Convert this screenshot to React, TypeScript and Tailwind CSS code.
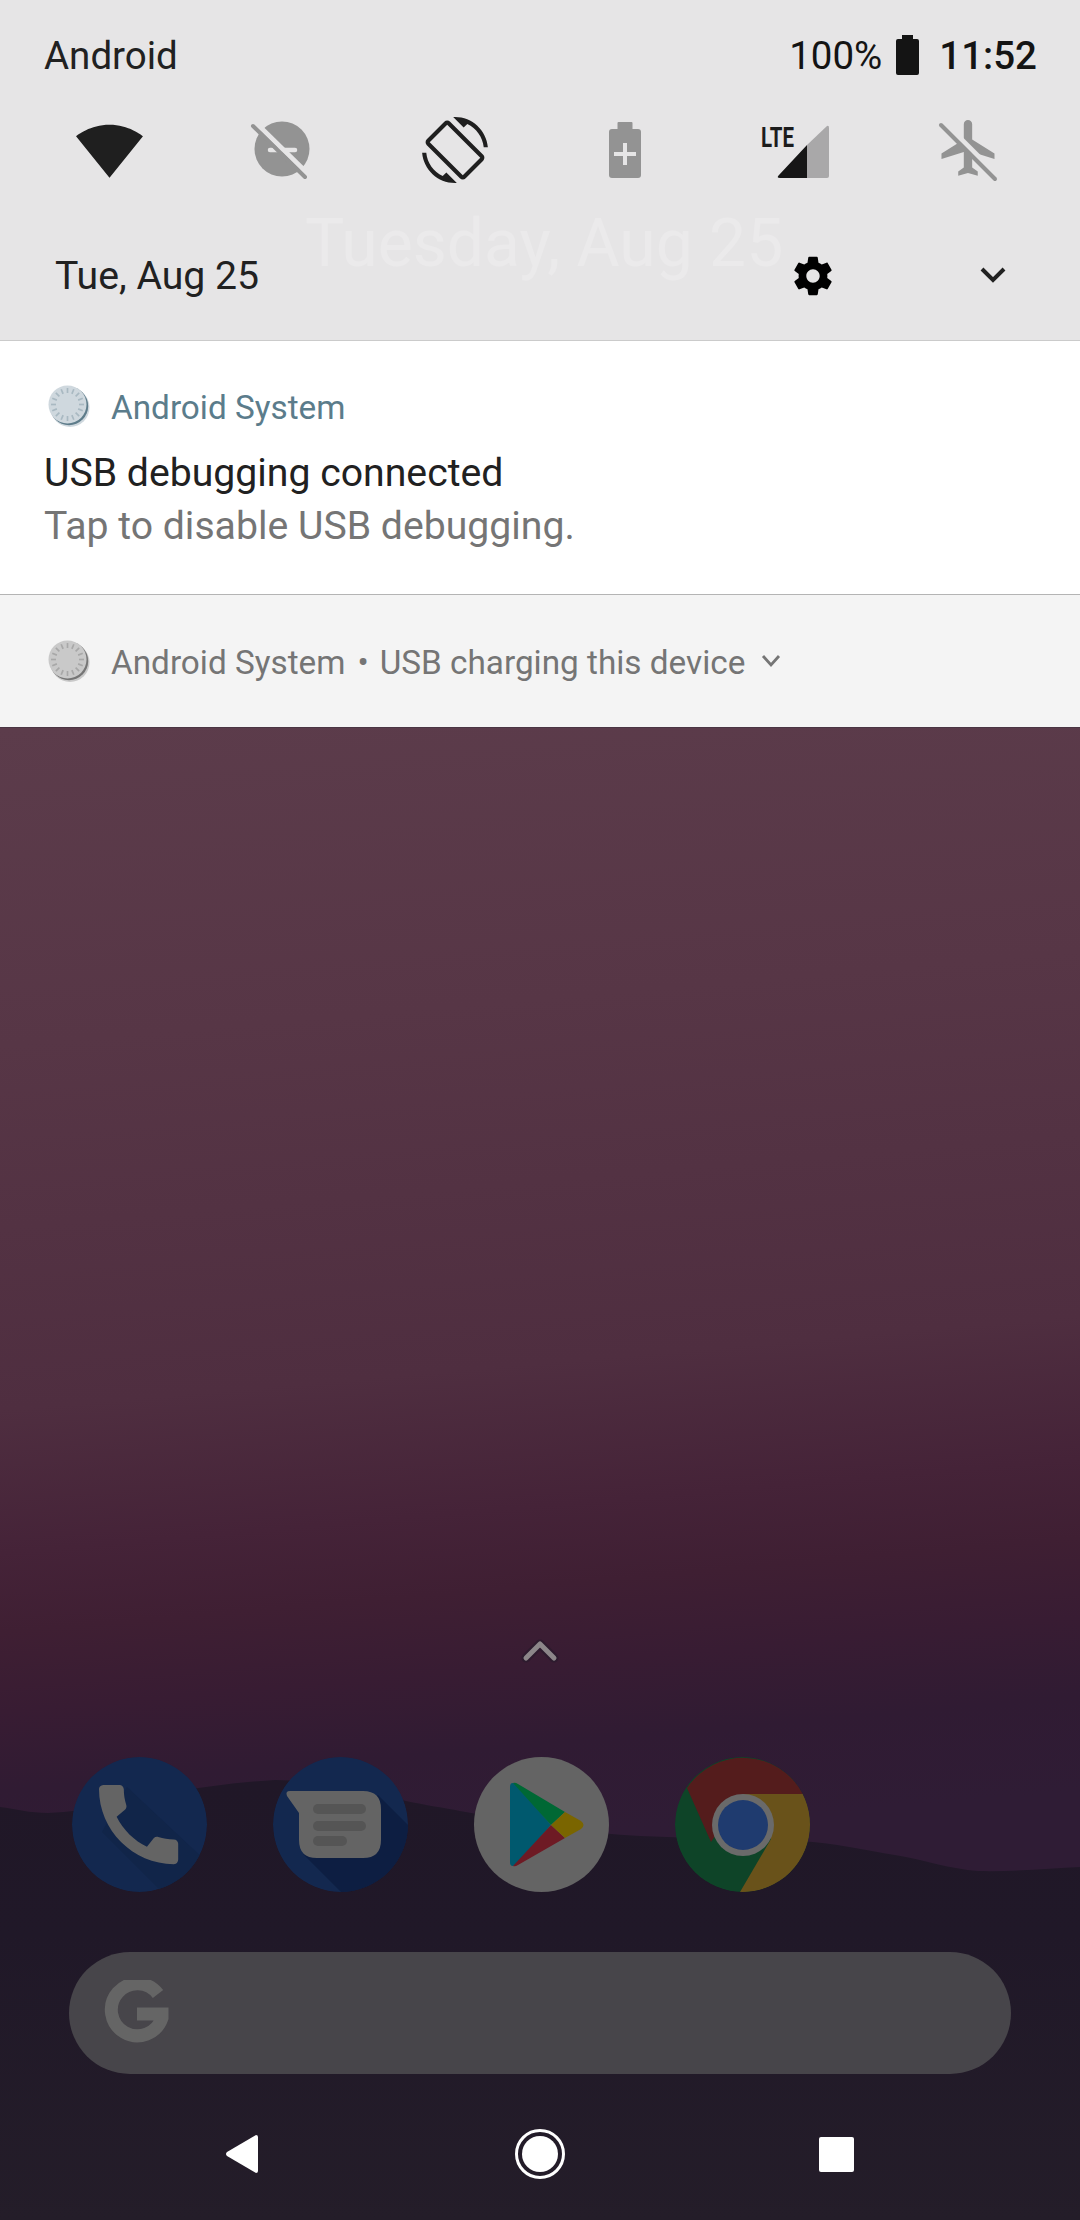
import React from "react";

function SystemIcon({ face, shade, rim, tick }: { face: string; shade: string; rim: string; tick: string }) {
  const ticks = Array.from({ length: 16 }, (_, i) => (i * 360) / 16);
  return (
    <svg viewBox="0 0 42 42" className="w-[42px] h-[42px] shrink-0">
      <circle cx="22" cy="22.5" r="19.5" fill={rim} />
      <circle cx="21" cy="21" r="19.2" fill={shade} />
      <circle cx="19.5" cy="19.5" r="19" fill={face} />
      {ticks.map((a) => (
        <line key={a} x1="19.5" y1="3" x2="19.5" y2="8" stroke={tick} strokeWidth="1.7" transform={`rotate(${a} 19.5 19.5)`} />
      ))}
    </svg>
  );
}

function Wifi() {
  return (
    <svg viewBox="0 0 24 24" className="w-[69px] h-[69px]">
      <path fill="#1f1f1f" d="M12.01 21.49L23.64 7c-.45-.34-4.93-4-11.64-4C5.28 3 .81 6.66.36 7l11.63 14.49.01.01.01-.01z" />
    </svg>
  );
}

function Dnd() {
  return (
    <svg viewBox="0 0 62 64" className="w-[62px] h-[64px]">
      <circle cx="32" cy="31" r="27.5" fill="#939393" />
      <line x1="20" y1="32" x2="45" y2="32" stroke="#e6e5e6" strokeWidth="4.5" strokeLinecap="round" />
      <line x1="6" y1="5" x2="58" y2="56" stroke="#e6e5e6" strokeWidth="5" />
      <line x1="3" y1="8" x2="55" y2="59" stroke="#939393" strokeWidth="4" strokeLinecap="round" />
    </svg>
  );
}

function Rotate() {
  return (
    <svg viewBox="0 0 24 24" className="w-[66px] h-[66px]">
      <path
        fill="#1f1f1f"
        d="M16.48 2.52c3.27 1.55 5.61 4.72 5.97 8.48h1.5C23.44 4.84 18.29 0 12 0l-.66.03 3.81 3.81 1.33-1.32zm-6.25-.77c-.59-.59-1.54-.59-2.12 0L1.75 8.11c-.59.59-.59 1.54 0 2.12l12.02 12.02c.59.59 1.54.59 2.12 0l6.36-6.36c.59-.59.59-1.54 0-2.12L10.23 1.75zm4.6 19.44L2.81 9.17l6.36-6.36 12.02 12.02-6.36 6.36zm-7.31.29C4.25 19.94 1.91 16.76 1.55 13H.05C.56 19.16 5.71 24 12 24l.66-.03-3.81-3.81-1.33 1.32z"
      />
    </svg>
  );
}

function BatteryPlus() {
  return (
    <svg viewBox="0 0 32 56" className="w-[32px] h-[56px]">
      <rect x="8.5" y="0" width="15" height="10" rx="1" fill="#939393" />
      <rect x="0" y="7" width="32" height="49" rx="3" fill="#939393" />
      <line x1="5" y1="32" x2="27" y2="32" stroke="#e6e5e6" strokeWidth="4" />
      <line x1="16" y1="21" x2="16" y2="43" stroke="#e6e5e6" strokeWidth="4" />
    </svg>
  );
}

function Lte() {
  return (
    <svg viewBox="0 0 70 60" className="w-[70px] h-[60px]">
      <text x="0" y="27" fontSize="28" fontWeight="700" fontFamily="Roboto, sans-serif" fill="#1c1c1c" textLength="33" lengthAdjust="spacingAndGlyphs">
        LTE
      </text>
      <path d="M46 25 L66 6 Q68 5 68 8 L68 56 Q68 58 66 58 L46 58 Z" fill="#a9a8a9" />
      <path d="M46 25 L46 58 L19 58 Q15 58 18 55 Z" fill="#161616" />
    </svg>
  );
}

function AirplaneOff() {
  return (
    <svg viewBox="0 0 62 66" className="w-[62px] h-[66px]">
      <g transform="translate(-1.1 -2.6) scale(2.79)">
        <path fill="#939393" d="M21 16v-2l-8-5V3.5c0-.83-.67-1.5-1.5-1.5S10 2.67 10 3.5V9l-8 5v2l8-2.5V19l-2 1.5V22l3.5-1 3.5 1v-1.5L13 19v-5.5l8 2.5z" />
      </g>
      <line x1="7" y1="5" x2="61" y2="59" stroke="#e6e5e6" strokeWidth="5" />
      <line x1="4" y1="8" x2="58" y2="62" stroke="#939393" strokeWidth="4" strokeLinecap="round" />
    </svg>
  );
}

function Gear() {
  return (
    <svg viewBox="0 0 24 24" className="w-[46px] h-[46px]">
      <path
        fill="#000"
        d="M19.43 12.98c.04-.32.07-.64.07-.98s-.03-.66-.07-.98l2.11-1.65c.19-.15.24-.42.12-.64l-2-3.46c-.12-.22-.39-.3-.61-.22l-2.49 1c-.52-.4-1.08-.73-1.69-.98l-.38-2.65C14.46 2.18 14.25 2 14 2h-4c-.25 0-.46.18-.49.42l-.38 2.65c-.61.25-1.17.59-1.69.98l-2.49-1c-.23-.09-.49 0-.61.22l-2 3.46c-.13.22-.07.49.12.64l2.11 1.65c-.04.32-.07.65-.07.98s.03.66.07.98l-2.11 1.65c-.19.15-.24.42-.12.64l2 3.46c.12.22.39.3.61.22l2.49-1c.52.4 1.08.73 1.69.98l.38 2.65c.03.24.24.42.49.42h4c.25 0 .46-.18.49-.42l.38-2.65c.61-.25 1.17-.59 1.69-.98l2.49 1c.23.09.49 0 .61-.22l2-3.46c.12-.22.07-.49-.12-.64l-2.11-1.65zM12 15.5c-1.93 0-3.5-1.57-3.5-3.5s1.57-3.5 3.5-3.5 3.5 1.57 3.5 3.5-1.57 3.5-3.5 3.5z"
      />
    </svg>
  );
}

function PhoneApp() {
  return (
    <svg viewBox="0 0 135 135" className="w-[135px] h-[135px] rounded-full overflow-hidden">
      <circle cx="67.5" cy="67.5" r="67.5" fill="#13284f" />
      <path d="M55 30 L135 105 L135 135 L90 135 L30 75 Z" fill="#112549" />
      <g transform="translate(13.8 14.8) scale(4.4)">
        <path
          fill="#646464"
          d="M20.01 15.38c-1.23 0-2.42-.2-3.53-.56-.35-.12-.74-.03-1.01.24l-1.57 1.97c-2.83-1.35-5.48-3.9-6.89-6.83l1.95-1.66c.27-.28.35-.67.24-1.02-.37-1.11-.56-2.3-.56-3.53 0-.54-.45-.99-.99-.99H4.19C3.65 3 3 3.24 3 3.99 3 13.28 10.73 21 20.01 21c.71 0 .99-.63.99-1.18v-3.45c0-.54-.45-.99-.99-.99z"
        />
      </g>
    </svg>
  );
}

function MessagesApp() {
  return (
    <svg viewBox="0 0 135 135" className="w-[135px] h-[135px] rounded-full overflow-hidden">
      <circle cx="67.5" cy="67.5" r="67.5" fill="#13284f" />
      <path d="M105 38 L135 68 L135 135 L68 135 L30 97 Z" fill="#0d1e42" />
      <path d="M17 34 L90 34 Q108 34 108 52 L108 83 Q108 101 90 101 L44 101 Q26 101 26 83 L26 56 L14 39 Q12 34 17 34 Z" fill="#646464" />
      <rect x="40" y="47" width="53" height="10" rx="5" fill="#555" />
      <rect x="40" y="64" width="53" height="10" rx="5" fill="#555" />
      <rect x="40" y="79" width="34" height="10" rx="5" fill="#555" />
    </svg>
  );
}

function PlayApp() {
  return (
    <svg viewBox="0 0 135 135" className="w-[135px] h-[135px]">
      <circle cx="67.5" cy="67.5" r="67.5" fill="#646464" />
      <path d="M36 30 Q36 24 42 27 L77 68 L42 108 Q36 111 36 105 Z" fill="#00596e" />
      <path d="M39 26 Q41 25 44 27 L91 55 L77 68 Z" fill="#006834" />
      <path d="M39 109 Q41 110 44 108 L91 81 L77 68 Z" fill="#6e1a24" />
      <path d="M91 55 L107 64 Q112 68 107 72 L91 81 L77 68 Z" fill="#7a6500" />
    </svg>
  );
}

function ChromeApp() {
  return (
    <svg viewBox="0 0 135 135" className="w-[135px] h-[135px] rounded-full overflow-hidden">
      <circle cx="67.5" cy="67.5" r="67.5" fill="#0e4428" />
      <path d="M12 31 A67.5 67.5 0 0 1 128 37 L68 37 L36 85 Z" fill="#541c1c" />
      <path d="M128 37 A67.5 67.5 0 0 1 65 135 L96 82 L68 37 Z" fill="#69521a" />
      <circle cx="68" cy="68" r="31" fill="#6a6a6a" />
      <circle cx="68" cy="68" r="25" fill="#1f3b6f" />
    </svg>
  );
}

function GoogleG() {
  return (
    <svg viewBox="0 0 66 66" className="w-[66px] h-[66px]">
      <path d="M54 14 A26 26 0 1 0 58 38 L58 34 L33 34" fill="none" stroke="#656565" strokeWidth="13" />
    </svg>
  );
}

export default function App() {
  return (
    <div className="relative flex flex-col w-[1080px] h-[2220px] overflow-hidden font-[family-name:Roboto,sans-serif]">
      <div className="relative flex flex-col h-[341px] shrink-0 bg-[#e6e5e6] border-b border-[#cbcbcb]">
        <div className="absolute left-[305px] top-[205px] text-[66px] leading-[77px] whitespace-nowrap text-[#ebeaeb]">Tuesday, Aug 25</div>
        <div className="relative flex items-start justify-between h-[92px] pt-[34px] pl-[44px] pr-[43px] text-[38.5px] leading-[44px]">
          <span className="text-[#212121]">Android</span>
          <div className="flex items-start text-[#141414]">
            <span>100%</span>
            <svg viewBox="0 0 23 40" className="w-[23px] h-[40px] mt-[1px] ml-[14px] mr-[20px]">
              <path d="M6 0 H17 V4 H21 Q23 4 23 6 V38 Q23 40 21 40 H2 Q0 40 0 38 V6 Q0 4 2 4 H6 Z" fill="#141414" />
            </svg>
            <span className="font-medium">11:52</span>
          </div>
        </div>
        <div className="relative grid grid-cols-6 items-center h-[108px] pl-[24px] pr-[26px] mt-[4px]">
          <div className="flex justify-center"><Wifi /></div>
          <div className="flex justify-center"><Dnd /></div>
          <div className="flex justify-center pl-[3px]"><Rotate /></div>
          <div className="flex justify-center"><BatteryPlus /></div>
          <div className="flex justify-center"><Lte /></div>
          <div className="flex justify-center"><AirplaneOff /></div>
        </div>
        <div className="relative flex items-center h-[100px] pl-[55px] mt-[22px]">
          <span className="w-[208px] whitespace-nowrap text-[39.2px] leading-[44px] text-[#212121]">Tue, Aug 25</span>
          <div className="ml-[527px]"><Gear /></div>
          <svg viewBox="0 0 30 20" className="w-[30px] h-[20px] ml-[142px]">
            <polyline points="4,3 15,14 26,3" fill="none" stroke="#212121" strokeWidth="4" />
          </svg>
        </div>
      </div>

      <div className="flex flex-col h-[254px] shrink-0 bg-white border-b border-[#b4b4b4] pt-[44px] pl-[44px]">
        <div className="flex items-center h-[42px]">
          <div className="ml-[4px]"><SystemIcon face="#cfd8de" shade="#5e7c8a" rim="#cfd8de" tick="#a9b9c2" /></div>
          <span className="ml-[21px] pt-[3px] text-[33.3px] leading-[40px] text-[#5b7c8b]">Android System</span>
        </div>
        <div className="mt-[24px] text-[39.2px] leading-[44px] text-[#212121]">USB debugging connected</div>
        <div className="mt-[9px] text-[39.2px] leading-[44px] text-[#757575]">Tap to disable USB debugging.</div>
      </div>

      <div className="flex items-center h-[132px] shrink-0 bg-[#f4f4f4] pl-[48px]">
        <SystemIcon face="#c9c9c9" shade="#757575" rim="#c9c9c9" tick="#a8a8a8" />
        <span className="ml-[21px] pt-[3px] text-[33.3px] leading-[40px] text-[#757575]">Android System</span>
        <span className="ml-[12px] pt-[3px] text-[33.3px] leading-[40px] text-[#757575]">•</span>
        <span className="ml-[11px] pt-[3px] text-[33.3px] leading-[40px] text-[#757575]">USB charging this device</span>
        <svg viewBox="0 0 20 14" className="w-[20px] h-[14px] ml-[16px]">
          <polyline points="2,2 10,11 18,2" fill="none" stroke="#757575" strokeWidth="2.8" />
        </svg>
      </div>

      <div className="relative flex flex-col items-stretch flex-1 border-t border-[#4a3543] bg-[linear-gradient(175deg,#5c3c4b_0%,#573646_20%,#4f2e40_43%,#452338_52%,#3f1f33_57%,#381c33_62%,#301b33_67%,#2f1c35_73%,#2f1c35_100%)]">
        <svg viewBox="0 0 1080 450" preserveAspectRatio="none" className="absolute left-0 bottom-0 w-[1080px] h-[450px]">
          <defs>
            <linearGradient id="ground" x1="0" y1="0" x2="0" y2="1">
              <stop offset="0" stopColor="#201727" />
              <stop offset="0.35" stopColor="#201828" />
              <stop offset="1" stopColor="#241d29" />
            </linearGradient>
          </defs>
          <path
            d="M0 37 C16 39 30 43 48 43 C90 42 130 28 172 22 C205 17 240 12 275 10 C320 10 365 20 406 31 C425 35 445 38 460 41 C510 50 555 58 600 63 C670 70 745 66 813 72 C845 75 870 81 895 85 C925 90 950 99 978 101 C1015 102 1050 98 1080 97 L1080 450 L0 450 Z"
            fill="url(#ground)"
          />
        </svg>

        <div className="relative flex flex-col mt-auto">
          <div className="flex justify-center">
            <svg viewBox="0 0 40 28" className="w-[40px] h-[28px]">
              <polyline points="6,22 20,8 34,22" fill="none" stroke="#2d1b2e" strokeWidth="9" strokeLinecap="round" strokeLinejoin="round" />
              <polyline points="6,22 20,8 34,22" fill="none" stroke="#8c8689" strokeWidth="5" strokeLinecap="round" strokeLinejoin="round" />
            </svg>
          </div>
          <div className="flex gap-[66px] pl-[72px] mt-[93px]">
            <PhoneApp />
            <MessagesApp />
            <PlayApp />
            <ChromeApp />
          </div>
          <div className="flex items-center h-[122px] mt-[60px] ml-[69px] w-[942px] rounded-full bg-[#47454a] pl-[35px]">
            <GoogleG />
          </div>
          <div className="flex items-center h-[146px] pt-[14px] pl-[226px]">
            <svg viewBox="0 0 32 38" className="w-[32px] h-[38px]">
              <path d="M30 0 Q32 0 32 2 V36 Q32 38 30 38 L1 21 Q-1 19 1 17 Z" fill="#fff" />
            </svg>
            <svg viewBox="0 0 50 50" className="w-[50px] h-[50px] ml-[257px]">
              <circle cx="25" cy="25" r="23.5" fill="none" stroke="#fff" strokeWidth="3" />
              <circle cx="25" cy="25" r="18" fill="#fff" />
            </svg>
            <div className="w-[35px] h-[35px] ml-[254px] rounded-[2px] bg-white" />
          </div>
        </div>
      </div>
    </div>
  );
}
